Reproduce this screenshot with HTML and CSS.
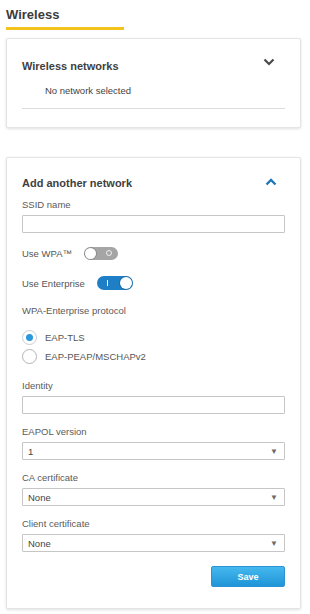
FILE: index.html
```html
<!DOCTYPE html>
<html lang="en">
<head>
    <meta charset="UTF-8">
    <meta name="viewport" content="width=device-width, initial-scale=1.0">
    <title>Wireless</title>
    <link rel="stylesheet" href="styles.css">
</head>
<body>
    <div class="page">
        <!-- Page title -->
        <h1 class="page-title"><span>Wireless</span></h1>

        <!-- Existing networks -->
        <div class="card card-networks">
            <div class="card-head">
                <h2>Wireless networks</h2>
                <svg class="chevron" width="12" height="8" viewBox="0 0 12 8"><path d="M1.5 1.5 L6 6 L10.5 1.5" fill="none" stroke="#4a4a4a" stroke-width="2.2"/></svg>
            </div>
            <p class="empty">No network selected</p>
            <div class="rule"></div>
        </div>

        <!-- Add network form -->
        <div class="card card-add">
            <div class="card-head">
                <h2>Add another network</h2>
                <svg class="chevron" width="12" height="8" viewBox="0 0 12 8"><path d="M1.5 6.5 L6 2 L10.5 6.5" fill="none" stroke="#1f78b8" stroke-width="2.4"/></svg>
            </div>

            <label class="label gap-s">SSID name</label>
            <div class="field"></div>

            <div class="switch-row first">
                <span>Use WPA™</span>
                <span class="toggle off"><span class="knob"></span><span class="mark-o"></span></span>
            </div>
            <div class="switch-row">
                <span>Use Enterprise</span>
                <span class="toggle on"><span class="mark-i"></span><span class="knob"></span></span>
            </div>

            <label class="label gap-l">WPA-Enterprise protocol</label>
            <div class="radio-row first"><span class="radio checked"></span>EAP-TLS</div>
            <div class="radio-row"><span class="radio"></span>EAP-PEAP/MSCHAPv2</div>

            <label class="label gap-xl">Identity</label>
            <div class="field"></div>

            <label class="label gap-m">EAPOL version</label>
            <div class="field select"><span>1</span><span class="arrow">▼</span></div>

            <label class="label gap-m">CA certificate</label>
            <div class="field select"><span>None</span><span class="arrow">▼</span></div>

            <label class="label gap-m">Client certificate</label>
            <div class="field select"><span>None</span><span class="arrow">▼</span></div>

            <div class="actions">
                <button class="save">Save</button>
            </div>
        </div>
    </div>
</body>
</html>
```

FILE: styles.css
```css
body {
    margin: 0;
    background: #fff;
    font-family: "Liberation Sans", Arial, sans-serif;
    color: #555;
}

.page { padding: 0 9px 7px 6px; }

/* Title with yellow underline */
.page-title {
    margin: 0;
    padding-top: 7px;
    font-size: 13px;
    line-height: 16px;
    color: #3c3c3c;
}
.page-title span {
    display: inline-block;
    width: 118px;
    padding-bottom: 4px;
    border-bottom: 3px solid #f3c21c;
}

/* Cards */
.card {
    border: 1px solid #e4e4e4;
    border-radius: 2px;
    box-shadow: 0 1px 3px rgba(0, 0, 0, 0.12);
    padding: 0 15px;
    background: #fff;
}
.card-networks {
    margin-top: 8px;
    padding-top: 19px;
    padding-bottom: 18px;
}
.card-add {
    margin-top: 29px;
    padding-top: 17px;
    padding-bottom: 21px;
}

.card-head {
    display: flex;
    justify-content: space-between;
    align-items: center;
    height: 16px;
}
.card-head h2 {
    margin: 0;
    font-size: 11px;
    color: #3f3f3f;
}
.card-networks .chevron { margin-right: 10px; margin-top: -8px; }
.card-add .chevron { margin-right: 8px; margin-top: -2px; }

.empty {
    margin: 11px 0 0 23px;
    font-size: 9.5px;
    line-height: 12px;
    color: #444;
}
.rule {
    margin-top: 11px;
    border-top: 1px solid #dcdcdc;
}

/* Form labels and fields */
.label {
    display: block;
    font-size: 9.5px;
    line-height: 12px;
    color: #5a5a5a;
}
.gap-s { margin-top: 8px; }
.gap-m { margin-top: 12px; }
.gap-l { margin-top: 14px; }
.gap-xl { margin-top: 16px; }

.field {
    box-sizing: border-box;
    height: 18px;
    margin-top: 4px;
    border: 1px solid #c6c6c6;
    border-radius: 1px;
    background: #fff;
}
.select {
    display: flex;
    justify-content: space-between;
    align-items: center;
    padding: 0 6px 0 5px;
    font-size: 9.5px;
    color: #444;
}
.select .arrow {
    font-size: 8px;
    color: #6a6a6a;
}

/* Switch rows */
.switch-row {
    display: flex;
    align-items: center;
    height: 16px;
    margin-top: 14px;
    font-size: 9.5px;
    color: #555;
}
.switch-row.first { margin-top: 12px; }
.switch-row > span:first-child { margin-right: 12px; }

.toggle {
    position: relative;
    display: inline-flex;
    align-items: center;
    justify-content: space-between;
    box-sizing: border-box;
    width: 35px;
    height: 14px;
    border-radius: 7px;
    padding: 0 1px;
}
.toggle.off { background: #a5a5a5; width: 34px; height: 13px; }
.toggle.on { background: #1e7fc6; width: 36px; }
.knob {
    width: 12px;
    height: 12px;
    border-radius: 50%;
    background: #fff;
    box-shadow: 0 0 0 1px rgba(0, 0, 0, 0.15);
}
.toggle.off .knob { width: 11px; height: 11px; }
.mark-o {
    width: 4px;
    height: 4px;
    margin-right: 5px;
    border: 1px solid #eee;
    border-radius: 50%;
}
.mark-i {
    width: 1.5px;
    height: 6px;
    margin-left: 9px;
    background: #fff;
}

/* Radios */
.radio-row {
    display: flex;
    align-items: center;
    height: 16px;
    margin-top: 3px;
    font-size: 9.5px;
    color: #555;
}
.radio-row.first { margin-top: 12px; }
.radio {
    box-sizing: border-box;
    width: 15px;
    height: 15px;
    margin: 0 8px 0 0;
    border: 1px solid #b4b4b4;
    border-radius: 50%;
    background: #fff;
    display: inline-flex;
    align-items: center;
    justify-content: center;
}
.radio.checked { border-color: #c5cfd8; }
.radio.checked::after {
    content: "";
    width: 7px;
    height: 7px;
    border-radius: 50%;
    background: #2a98da;
}

/* Save */
.actions {
    display: flex;
    justify-content: flex-end;
    margin-top: 14px;
}
.save {
    width: 74px;
    height: 21px;
    border: 1px solid #2b93d3;
    border-radius: 2px;
    background: linear-gradient(#45b8ee, #1f95d8);
    color: #fff;
    font-family: "Liberation Sans", Arial, sans-serif;
    font-size: 9px;
    font-weight: bold;
    padding: 0;
}
```
